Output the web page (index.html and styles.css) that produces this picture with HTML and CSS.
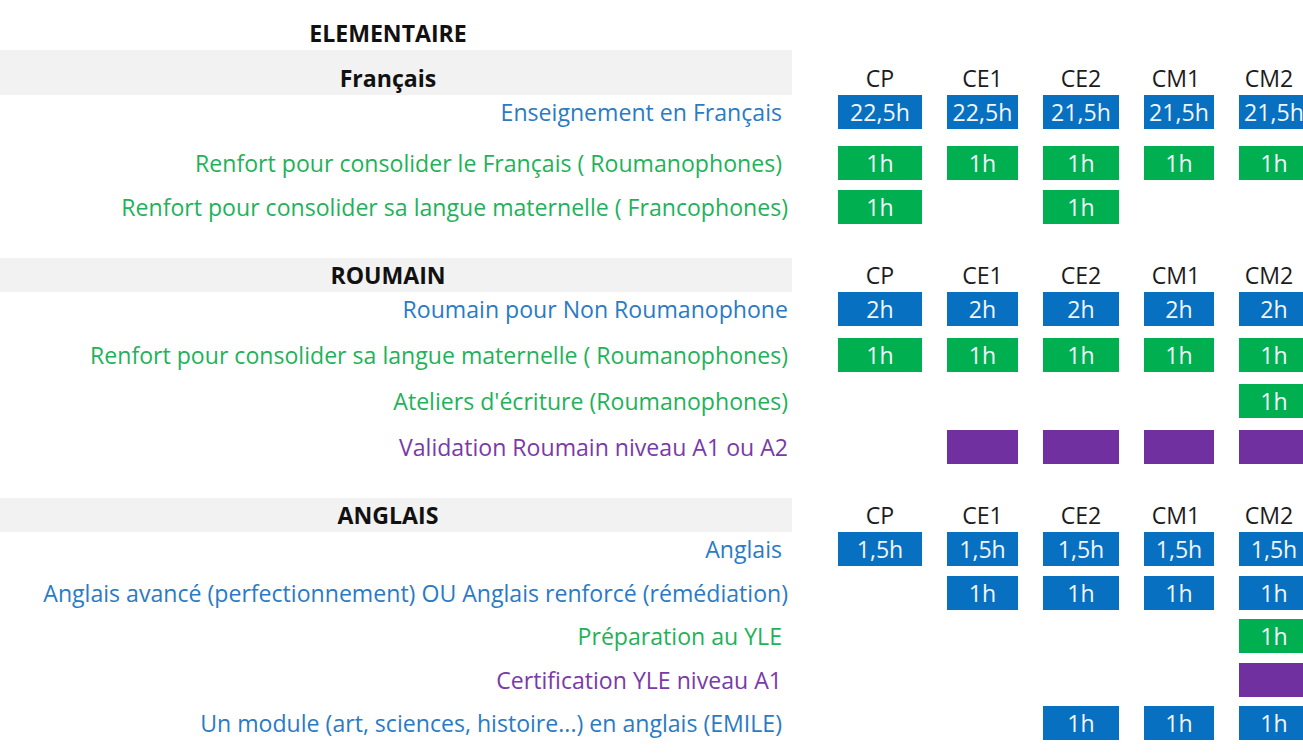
FILE: index.html
```html
<!DOCTYPE html>
<html lang="fr">
<head>
<meta charset="utf-8">
<title>Elémentaire</title>
<link rel="stylesheet" href="styles.css">
</head>
<body>
<main class="sheet">
  <div class="title">ELEMENTAIRE</div>

  <section class="sec">
    <div class="row head head--tall">
      <div class="band">Français</div>
      <div class="lvl">CP</div>
      <div class="lvl">CE1</div>
      <div class="lvl">CE2</div>
      <div class="lvl lvl--cm1">CM1</div>
      <div class="lvl lvl--cm2">CM2</div>
    </div>
    <div class="rows rows--fr">
      <div class="row">
        <div class="label blue inset">Enseignement en Français</div>
        <div class="box b-blue">22,5h</div>
        <div class="box b-blue">22,5h</div>
        <div class="box b-blue">21,5h</div>
        <div class="box b-blue">21,5h</div>
        <div class="box b-blue">21,5h</div>
      </div>
      <div class="row row--spaced">
        <div class="label green inset">Renfort pour consolider le Français ( Roumanophones)</div>
        <div class="box b-green">1h</div>
        <div class="box b-green">1h</div>
        <div class="box b-green">1h</div>
        <div class="box b-green">1h</div>
        <div class="box b-green">1h</div>
      </div>
      <div class="row">
        <div class="label green">Renfort pour consolider sa langue maternelle ( Francophones)</div>
        <div class="box b-green">1h</div>
        <div class="empty"></div>
        <div class="box b-green">1h</div>
        <div class="empty"></div>
        <div class="empty"></div>
      </div>
    </div>
  </section>

  <section class="sec">
    <div class="row head">
      <div class="band">ROUMAIN</div>
      <div class="lvl">CP</div>
      <div class="lvl">CE1</div>
      <div class="lvl">CE2</div>
      <div class="lvl lvl--cm1">CM1</div>
      <div class="lvl lvl--cm2">CM2</div>
    </div>
    <div class="rows rows--ro">
      <div class="row">
        <div class="label blue">Roumain pour Non Roumanophone</div>
        <div class="box b-blue">2h</div>
        <div class="box b-blue">2h</div>
        <div class="box b-blue">2h</div>
        <div class="box b-blue">2h</div>
        <div class="box b-blue">2h</div>
      </div>
      <div class="row">
        <div class="label green">Renfort pour consolider sa langue maternelle ( Roumanophones)</div>
        <div class="box b-green">1h</div>
        <div class="box b-green">1h</div>
        <div class="box b-green">1h</div>
        <div class="box b-green">1h</div>
        <div class="box b-green">1h</div>
      </div>
      <div class="row">
        <div class="label green">Ateliers d'écriture (Roumanophones)</div>
        <div class="empty"></div>
        <div class="empty"></div>
        <div class="empty"></div>
        <div class="empty"></div>
        <div class="box b-green">1h</div>
      </div>
      <div class="row">
        <div class="label purple">Validation Roumain niveau A1 ou A2</div>
        <div class="empty"></div>
        <div class="box b-purple"></div>
        <div class="box b-purple"></div>
        <div class="box b-purple"></div>
        <div class="box b-purple"></div>
      </div>
    </div>
  </section>

  <section class="sec">
    <div class="row head">
      <div class="band">ANGLAIS</div>
      <div class="lvl">CP</div>
      <div class="lvl">CE1</div>
      <div class="lvl">CE2</div>
      <div class="lvl lvl--cm1">CM1</div>
      <div class="lvl lvl--cm2">CM2</div>
    </div>
    <div class="rows rows--en">
      <div class="row">
        <div class="label blue inset">Anglais</div>
        <div class="box b-blue">1,5h</div>
        <div class="box b-blue">1,5h</div>
        <div class="box b-blue">1,5h</div>
        <div class="box b-blue">1,5h</div>
        <div class="box b-blue">1,5h</div>
      </div>
      <div class="row">
        <div class="label blue">Anglais avancé (perfectionnement) OU Anglais renforcé (rémédiation)</div>
        <div class="empty"></div>
        <div class="box b-blue">1h</div>
        <div class="box b-blue">1h</div>
        <div class="box b-blue">1h</div>
        <div class="box b-blue">1h</div>
      </div>
      <div class="row">
        <div class="label green inset">Préparation au YLE</div>
        <div class="empty"></div>
        <div class="empty"></div>
        <div class="empty"></div>
        <div class="empty"></div>
        <div class="box b-green">1h</div>
      </div>
      <div class="row">
        <div class="label purple inset">Certification YLE niveau A1</div>
        <div class="empty"></div>
        <div class="empty"></div>
        <div class="empty"></div>
        <div class="empty"></div>
        <div class="box b-purple"></div>
      </div>
      <div class="row">
        <div class="label blue inset">Un module (art, sciences, histoire...) en anglais (EMILE)</div>
        <div class="empty"></div>
        <div class="empty"></div>
        <div class="box b-blue">1h</div>
        <div class="box b-blue">1h</div>
        <div class="box b-blue">1h</div>
      </div>
    </div>
  </section>
</main>
</body>
</html>
```

FILE: styles.css
```css
html, body {
  margin: 0;
  padding: 0;
  background: #ffffff;
  overflow: hidden;
}

body {
  font-family: "Open Sans", "Noto Sans", "Liberation Sans", sans-serif;
  font-size: 23.1px;
  line-height: 34px;
  color: #1a1a1a;
}

.sheet {
  width: 1320px;
}

.title {
  width: 792px;
  box-sizing: border-box;
  padding: 16px 16px 0 0;
  height: 50px;
  text-align: center;
  font-weight: 700;
  color: #111111;
}

.sec + .sec {
  margin-top: 34px;
}

.row {
  display: grid;
  grid-template-columns: 813px 84px 71px 76px 70px 70px;
  column-gap: 25px;
  height: 34px;
}

.head {
  align-items: end;
}

.head--tall {
  height: 45px;
}

.band {
  align-self: stretch;
  margin-right: 21px;
  padding-right: 16px;
  background: #f2f2f2;
  display: flex;
  align-items: flex-end;
  justify-content: center;
  font-weight: 700;
  color: #111111;
}

.lvl {
  text-align: center;
  color: #1c1c1c;
}

.lvl--cm1 { padding-right: 6px; }
.lvl--cm2 { padding-right: 10px; }

.rows {
  display: flex;
  flex-direction: column;
}

.rows--fr { gap: 10px; }
.rows--fr .row--spaced { margin-top: 7px; }
.rows--ro { gap: 12px; }
.rows--en { gap: 9.5px; }

.label {
  text-align: right;
  padding-right: 25px;
  white-space: nowrap;
}

.label.inset {
  padding-right: 31px;
}

.blue { color: #2a7bc4; }
.green { color: #1fb25a; }
.purple { color: #7a3aa8; }

.box {
  height: 34px;
  text-align: center;
  color: #f2f6fa;
  white-space: nowrap;
}

.b-blue { background: #0870c0; }
.b-green { background: #00b050; }
.b-purple { background: #7030a0; }
```
